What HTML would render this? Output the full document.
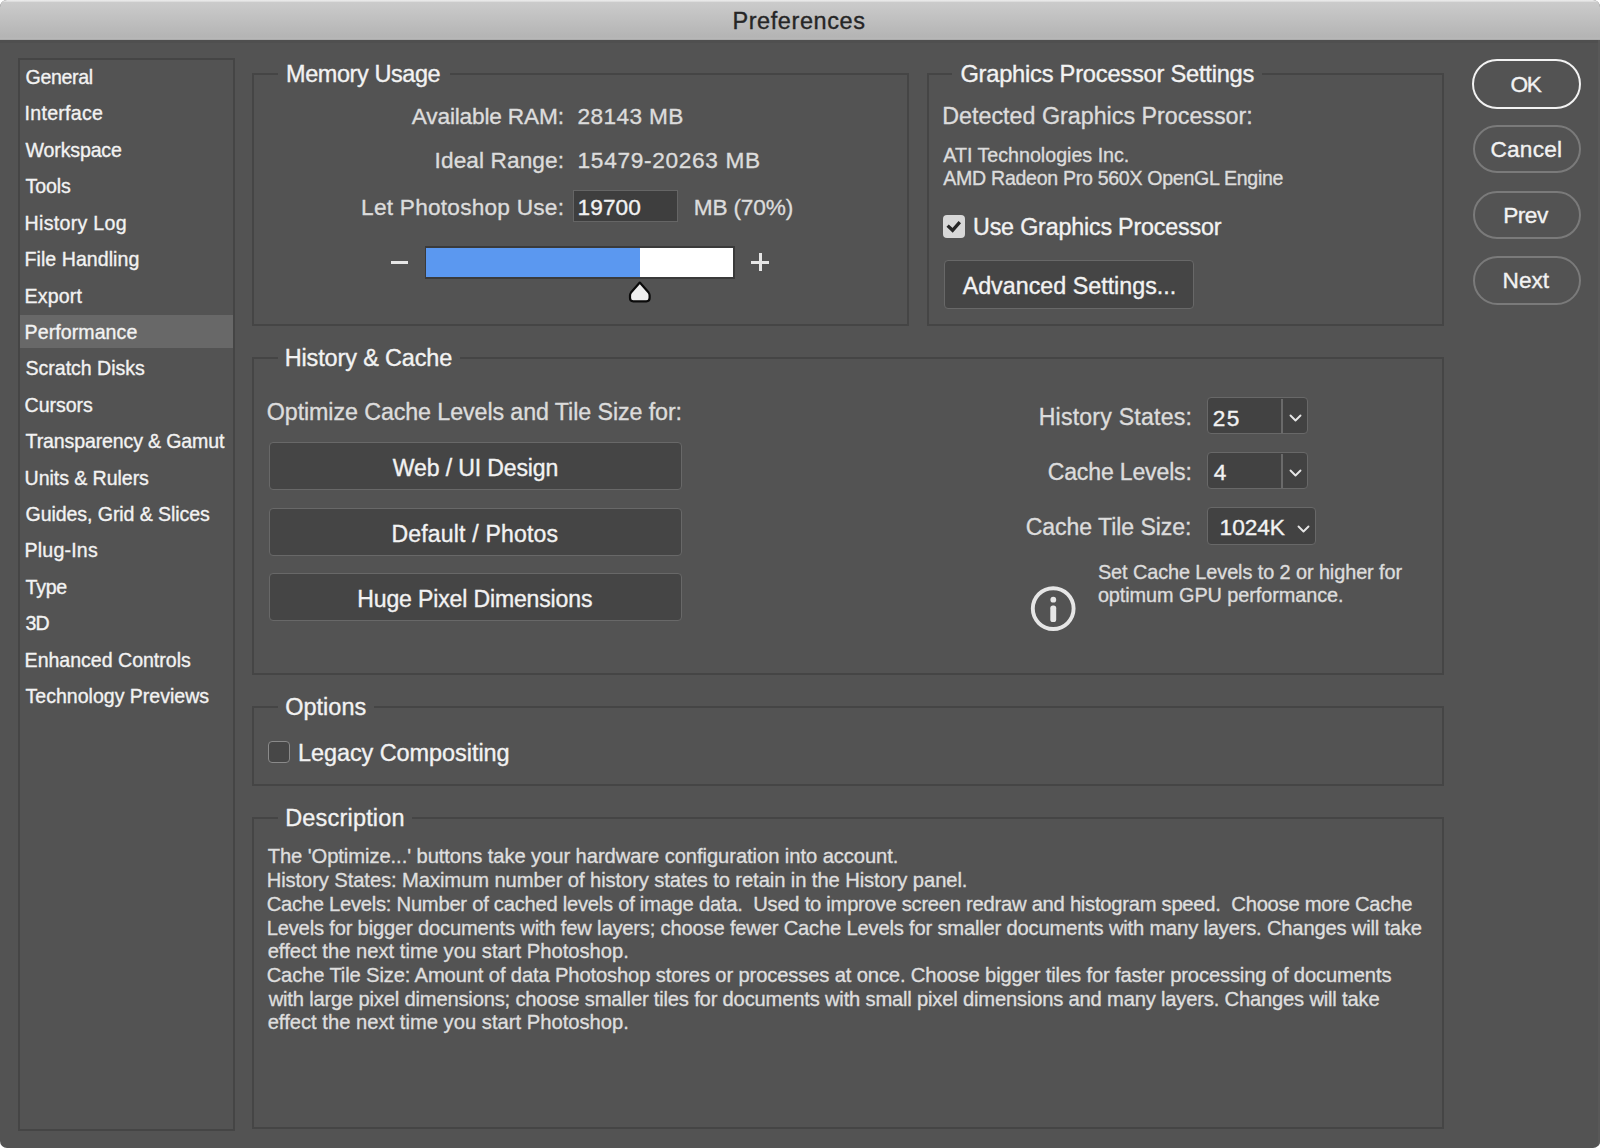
<!DOCTYPE html>
<html><head><meta charset="utf-8"><style>
html,body{margin:0;padding:0;background:#ffffff;width:1600px;height:1148px;overflow:hidden}
body{font-family:"Liberation Sans",sans-serif;position:relative}
.win{position:absolute;left:0;top:0;width:1600px;height:1148px;background:#535353;border-radius:7px 7px 7px 7px;overflow:hidden}
.title{position:absolute;left:0;top:0;width:1600px;height:40px;background:linear-gradient(#ebebeb 0px,#e6e6e6 1px,#cbcbcb 2.5px,#b4b4b4 37px,#b8b8b8 39px,#a0a0a0 40px)}
.t{position:absolute;white-space:pre;-webkit-text-stroke:0.35px currentColor}
.box{position:absolute;box-sizing:border-box;border:2px solid #454545}
.gap{position:absolute;background:#535353}
.btn{position:absolute;box-sizing:border-box;background:#454545;border:1.5px solid #686868;border-radius:4px}
.pill{position:absolute;box-sizing:border-box;border:2px solid #7a7a7a;border-radius:25px}
</style></head><body><div class="win">
<div class="title"></div>
<div style="position:absolute;left:0;top:40px;width:1600px;height:3px;background:#4f4f4f"></div>
<div style="position:absolute;left:1598px;top:40px;width:2px;height:1108px;background:#585858"></div>
<div class="box" style="left:18px;top:58px;width:217px;height:1073px;"></div>
<div style="position:absolute;left:20px;top:315px;width:213px;height:33px;background:#686868"></div>
<div class="box" style="left:252px;top:73px;width:657px;height:253px;"></div>
<div class="gap" style="left:278px;top:72px;width:172px;height:4px;"></div>
<div style="position:absolute;left:573px;top:190px;width:105px;height:32px;box-sizing:border-box;background:#3e3e3e;border:1.5px solid #656565"></div>
<div style="position:absolute;left:391px;top:260.5px;width:17px;height:3px;background:#e6e6e6"></div>
<div style="position:absolute;left:424.5px;top:246px;width:310px;height:32.5px;background:#3a3a3a"></div>
<div style="position:absolute;left:426px;top:247.5px;width:214px;height:29.5px;background:#5b98f0"></div>
<div style="position:absolute;left:640px;top:247.5px;width:93px;height:29.5px;background:#ffffff"></div>
<div style="position:absolute;left:751px;top:260.5px;width:18px;height:3px;background:#e6e6e6"></div>
<div style="position:absolute;left:758.5px;top:253px;width:3px;height:18px;background:#e6e6e6"></div>
<svg style="position:absolute;left:626px;top:279px" width="26" height="25" viewBox="0 0 26 25"><path d="M13.8 3.6 L22.6 13.6 Q23.6 14.8 23.6 16.5 L23.6 19 Q23.6 22.3 20.3 22.3 L7.3 22.3 Q4 22.3 4 19 L4 16.5 Q4 14.8 5 13.6 Z" fill="#eeeeee" stroke="#0a0a0a" stroke-width="2.2" stroke-linejoin="round"/></svg>
<div class="box" style="left:927px;top:73px;width:517px;height:253px;"></div>
<div class="gap" style="left:952px;top:72px;width:310px;height:4px;"></div>
<div style="position:absolute;left:943px;top:215px;width:22px;height:22.5px;box-sizing:border-box;background:#d8d8d8;border-radius:4px"></div>
<svg style="position:absolute;left:943px;top:215px" width="22" height="22" viewBox="0 0 22 22"><path d="M4.6 10.6 L9.6 15.3 L16.8 7.2" fill="none" stroke="#262626" stroke-width="3.3" stroke-linecap="butt" stroke-linejoin="miter"/></svg>
<div class="btn" style="left:944px;top:260px;width:250px;height:49px"></div>
<div class="pill" style="left:1472px;top:59px;width:109px;height:50px;border-color:#f2f2f2"></div>
<div class="pill" style="left:1472.5px;top:125px;width:108.5px;height:48.4px"></div>
<div class="pill" style="left:1472.5px;top:190.7px;width:108.5px;height:48.4px"></div>
<div class="pill" style="left:1472.5px;top:256.4px;width:108.5px;height:48.4px"></div>
<div class="box" style="left:252px;top:357px;width:1192px;height:318px;"></div>
<div class="gap" style="left:278px;top:356px;width:182px;height:4px;"></div>
<div class="btn" style="left:269px;top:442px;width:413px;height:48px"></div>
<div class="btn" style="left:269px;top:507.5px;width:413px;height:48px"></div>
<div class="btn" style="left:269px;top:573px;width:413px;height:48px"></div>
<div style="position:absolute;left:1207px;top:397px;width:101px;height:37px;box-sizing:border-box;background:#424242;border:1.5px solid #686868;border-radius:4px"></div>
<div style="position:absolute;left:1281px;top:398.5px;width:1.5px;height:34px;background:#6a6a6a"></div>
<svg style="position:absolute;left:1288px;top:413px" width="15" height="10" viewBox="0 0 15 10"><path d="M2.5 2.5 L7.5 7.5 L12.5 2.5" fill="none" stroke="#e6e6e6" stroke-width="1.9" stroke-linecap="round" stroke-linejoin="round"/></svg>
<div style="position:absolute;left:1207px;top:452px;width:101px;height:37px;box-sizing:border-box;background:#424242;border:1.5px solid #686868;border-radius:4px"></div>
<div style="position:absolute;left:1281px;top:453.5px;width:1.5px;height:34px;background:#6a6a6a"></div>
<svg style="position:absolute;left:1288px;top:468px" width="15" height="10" viewBox="0 0 15 10"><path d="M2.5 2.5 L7.5 7.5 L12.5 2.5" fill="none" stroke="#e6e6e6" stroke-width="1.9" stroke-linecap="round" stroke-linejoin="round"/></svg>
<div style="position:absolute;left:1207px;top:507px;width:109px;height:38px;box-sizing:border-box;background:#424242;border:1.5px solid #686868;border-radius:4px"></div>
<svg style="position:absolute;left:1296px;top:524px" width="15" height="10" viewBox="0 0 15 10"><path d="M2.5 2.5 L7.5 7.5 L12.5 2.5" fill="none" stroke="#e6e6e6" stroke-width="1.9" stroke-linecap="round" stroke-linejoin="round"/></svg>
<svg style="position:absolute;left:1028px;top:583px" width="50" height="50" viewBox="0 0 50 50"><circle cx="25.2" cy="25.6" r="20.4" fill="none" stroke="#e6e6e6" stroke-width="3.9"/><circle cx="25.3" cy="16.7" r="2.9" fill="#e6e6e6"/><rect x="22.3" y="22.6" width="5.9" height="16.4" rx="2.6" fill="#e6e6e6"/></svg>
<div class="box" style="left:252px;top:706px;width:1192px;height:80px;"></div>
<div class="gap" style="left:278px;top:705px;width:96px;height:4px;"></div>
<div style="position:absolute;left:268px;top:740.5px;width:22px;height:22px;box-sizing:border-box;background:#474747;border:1.5px solid #8a8a8a;border-radius:4px"></div>
<div class="box" style="left:252px;top:817px;width:1192px;height:312px;"></div>
<div class="gap" style="left:278px;top:816px;width:134px;height:4px;"></div>
<div class="t" style="left:732.40px;top:9.92px;font-size:23.484px;line-height:23.484px;color:#262626;letter-spacing:0.600px">Preferences</div>
<div class="t" style="left:25.60px;top:68.02px;font-size:19.589499999999997px;line-height:19.589499999999997px;color:#f2f2f2;letter-spacing:-0.367px">General</div>
<div class="t" style="left:24.60px;top:104.44px;font-size:19.589499999999997px;line-height:19.589499999999997px;color:#f2f2f2;letter-spacing:0.263px">Interface</div>
<div class="t" style="left:25.60px;top:140.86px;font-size:19.589499999999997px;line-height:19.589499999999997px;color:#f2f2f2;letter-spacing:-0.160px">Workspace</div>
<div class="t" style="left:25.60px;top:177.28px;font-size:19.589499999999997px;line-height:19.589499999999997px;color:#f2f2f2;letter-spacing:-0.129px">Tools</div>
<div class="t" style="left:24.60px;top:213.70px;font-size:19.589499999999997px;line-height:19.589499999999997px;color:#f2f2f2;letter-spacing:0.297px">History Log</div>
<div class="t" style="left:24.60px;top:250.12px;font-size:19.589499999999997px;line-height:19.589499999999997px;color:#f2f2f2;letter-spacing:0.035px">File Handling</div>
<div class="t" style="left:24.60px;top:286.54px;font-size:19.589499999999997px;line-height:19.589499999999997px;color:#f2f2f2;letter-spacing:0.131px">Export</div>
<div class="t" style="left:24.60px;top:322.96px;font-size:19.589499999999997px;line-height:19.589499999999997px;color:#f2f2f2;letter-spacing:0.061px">Performance</div>
<div class="t" style="left:25.60px;top:359.38px;font-size:19.589499999999997px;line-height:19.589499999999997px;color:#f2f2f2;letter-spacing:-0.040px">Scratch Disks</div>
<div class="t" style="left:24.60px;top:395.80px;font-size:19.589499999999997px;line-height:19.589499999999997px;color:#f2f2f2;letter-spacing:-0.041px">Cursors</div>
<div class="t" style="left:25.60px;top:432.22px;font-size:19.589499999999997px;line-height:19.589499999999997px;color:#f2f2f2;letter-spacing:-0.148px">Transparency &amp; Gamut</div>
<div class="t" style="left:24.60px;top:468.64px;font-size:19.589499999999997px;line-height:19.589499999999997px;color:#f2f2f2;letter-spacing:-0.064px">Units &amp; Rulers</div>
<div class="t" style="left:25.60px;top:505.06px;font-size:19.589499999999997px;line-height:19.589499999999997px;color:#f2f2f2;letter-spacing:-0.094px">Guides, Grid &amp; Slices</div>
<div class="t" style="left:24.60px;top:541.48px;font-size:19.589499999999997px;line-height:19.589499999999997px;color:#f2f2f2;letter-spacing:0.181px">Plug-Ins</div>
<div class="t" style="left:25.60px;top:577.90px;font-size:19.589499999999997px;line-height:19.589499999999997px;color:#f2f2f2;letter-spacing:-0.285px">Type</div>
<div class="t" style="left:25.60px;top:614.32px;font-size:19.589499999999997px;line-height:19.589499999999997px;color:#f2f2f2;letter-spacing:-1.088px">3D</div>
<div class="t" style="left:24.60px;top:650.74px;font-size:19.589499999999997px;line-height:19.589499999999997px;color:#f2f2f2;letter-spacing:-0.021px">Enhanced Controls</div>
<div class="t" style="left:25.60px;top:687.16px;font-size:19.589499999999997px;line-height:19.589499999999997px;color:#f2f2f2;letter-spacing:-0.023px">Technology Previews</div>
<div class="t" style="left:286.00px;top:62.72px;font-size:23.484px;line-height:23.484px;color:#f2f2f2;letter-spacing:-0.410px">Memory Usage</div>
<div class="t" style="left:411.80px;top:105.12px;font-size:22.66px;line-height:22.66px;color:#dcdcdc;letter-spacing:-0.175px">Available RAM:</div>
<div class="t" style="left:577.60px;top:105.12px;font-size:22.66px;line-height:22.66px;color:#dcdcdc;letter-spacing:0.347px">28143 MB</div>
<div class="t" style="left:434.60px;top:148.92px;font-size:22.66px;line-height:22.66px;color:#dcdcdc;letter-spacing:0.083px">Ideal Range:</div>
<div class="t" style="left:577.60px;top:148.92px;font-size:22.66px;line-height:22.66px;color:#dcdcdc;letter-spacing:0.668px">15479-20263 MB</div>
<div class="t" style="left:361.10px;top:195.92px;font-size:22.66px;line-height:22.66px;color:#dcdcdc;letter-spacing:0.229px">Let Photoshop Use:</div>
<div class="t" style="left:577.60px;top:196.22px;font-size:22.66px;line-height:22.66px;color:#f2f2f2;letter-spacing:0.075px">19700</div>
<div class="t" style="left:693.70px;top:195.92px;font-size:22.66px;line-height:22.66px;color:#dcdcdc;letter-spacing:-0.167px">MB (70%)</div>
<div class="t" style="left:960.40px;top:62.55px;font-size:23.69px;line-height:23.69px;color:#f2f2f2;letter-spacing:-0.237px">Graphics Processor Settings</div>
<div class="t" style="left:942.30px;top:104.80px;font-size:23.278000000000002px;line-height:23.278000000000002px;color:#dcdcdc;letter-spacing:0.005px">Detected Graphics Processor:</div>
<div class="t" style="left:943.30px;top:145.93px;font-size:19.690999999999995px;line-height:19.690999999999995px;color:#dcdcdc;letter-spacing:-0.020px">ATI Technologies Inc.</div>
<div class="t" style="left:943.30px;top:169.22px;font-size:19.589499999999997px;line-height:19.589499999999997px;color:#dcdcdc;letter-spacing:-0.299px">AMD Radeon Pro 560X OpenGL Engine</div>
<div class="t" style="left:973.00px;top:216.10px;font-size:23.278000000000002px;line-height:23.278000000000002px;color:#f2f2f2;letter-spacing:-0.175px">Use Graphics Processor</div>
<div class="t" style="left:962.65px;top:275.20px;font-size:23.278000000000002px;line-height:23.278000000000002px;color:#f2f2f2;letter-spacing:0.011px">Advanced Settings...</div>
<div class="t" style="left:1510.40px;top:72.72px;font-size:22.66px;line-height:22.66px;color:#f2f2f2;letter-spacing:-1.223px">OK</div>
<div class="t" style="left:1490.40px;top:137.92px;font-size:22.66px;line-height:22.66px;color:#f2f2f2;letter-spacing:0.242px">Cancel</div>
<div class="t" style="left:1503.20px;top:204.02px;font-size:22.66px;line-height:22.66px;color:#f2f2f2;letter-spacing:-0.486px">Prev</div>
<div class="t" style="left:1502.60px;top:269.42px;font-size:22.66px;line-height:22.66px;color:#f2f2f2;letter-spacing:-0.030px">Next</div>
<div class="t" style="left:284.70px;top:347.32px;font-size:23.484px;line-height:23.484px;color:#f2f2f2;letter-spacing:-0.136px">History &amp; Cache</div>
<div class="t" style="left:266.80px;top:400.90px;font-size:23.278000000000002px;line-height:23.278000000000002px;color:#dcdcdc;letter-spacing:-0.096px">Optimize Cache Levels and Tile Size for:</div>
<div class="t" style="left:392.80px;top:457.37px;font-size:23.072px;line-height:23.072px;color:#f2f2f2;letter-spacing:-0.140px">Web / UI Design</div>
<div class="t" style="left:391.40px;top:522.57px;font-size:23.072px;line-height:23.072px;color:#f2f2f2;letter-spacing:0.169px">Default / Photos</div>
<div class="t" style="left:357.30px;top:588.07px;font-size:23.072px;line-height:23.072px;color:#f2f2f2;letter-spacing:-0.164px">Huge Pixel Dimensions</div>
<div class="t" style="left:1038.65px;top:406.47px;font-size:23.072px;line-height:23.072px;color:#dcdcdc;letter-spacing:0.236px">History States:</div>
<div class="t" style="left:1047.70px;top:461.07px;font-size:23.072px;line-height:23.072px;color:#dcdcdc;letter-spacing:-0.161px">Cache Levels:</div>
<div class="t" style="left:1025.70px;top:516.07px;font-size:23.072px;line-height:23.072px;color:#dcdcdc;letter-spacing:-0.057px">Cache Tile Size:</div>
<div class="t" style="left:1212.70px;top:407.02px;font-size:22.66px;line-height:22.66px;color:#f2f2f2;letter-spacing:1.500px">25</div>
<div class="t" style="left:1213.70px;top:461.42px;font-size:22.66px;line-height:22.66px;color:#f2f2f2;letter-spacing:0.000px">4</div>
<div class="t" style="left:1219.60px;top:516.42px;font-size:22.66px;line-height:22.66px;color:#f2f2f2;letter-spacing:-0.050px">1024K</div>
<div class="t" style="left:1097.90px;top:562.56px;font-size:19.894px;line-height:19.894px;color:#dcdcdc;letter-spacing:-0.086px">Set Cache Levels to 2 or higher for</div>
<div class="t" style="left:1097.90px;top:586.06px;font-size:19.894px;line-height:19.894px;color:#dcdcdc;letter-spacing:-0.078px">optimum GPU performance.</div>
<div class="t" style="left:285.15px;top:696.47px;font-size:23.484px;line-height:23.484px;color:#f2f2f2;letter-spacing:0.042px">Options</div>
<div class="t" style="left:297.90px;top:741.92px;font-size:23.484px;line-height:23.484px;color:#f2f2f2;letter-spacing:-0.055px">Legacy Compositing</div>
<div class="t" style="left:285.15px;top:806.72px;font-size:23.484px;line-height:23.484px;color:#f2f2f2;letter-spacing:0.206px">Description</div>
<div class="t" style="left:267.65px;top:846.40px;font-size:20.198499999999996px;line-height:20.198499999999996px;color:#dedede;letter-spacing:-0.075px">The 'Optimize...' buttons take your hardware configuration into account.</div>
<div class="t" style="left:266.65px;top:870.10px;font-size:20.198499999999996px;line-height:20.198499999999996px;color:#dedede;letter-spacing:-0.091px">History States: Maximum number of history states to retain in the History panel.</div>
<div class="t" style="left:266.65px;top:893.80px;font-size:20.198499999999996px;line-height:20.198499999999996px;color:#dedede;letter-spacing:-0.257px">Cache Levels: Number of cached levels of image data.  Used to improve screen redraw and histogram speed.  Choose more Cache</div>
<div class="t" style="left:266.65px;top:917.50px;font-size:20.198499999999996px;line-height:20.198499999999996px;color:#dedede;letter-spacing:-0.197px">Levels for bigger documents with few layers; choose fewer Cache Levels for smaller documents with many layers. Changes will take</div>
<div class="t" style="left:267.65px;top:941.20px;font-size:20.198499999999996px;line-height:20.198499999999996px;color:#dedede;letter-spacing:0.007px">effect the next time you start Photoshop.</div>
<div class="t" style="left:266.65px;top:964.90px;font-size:20.198499999999996px;line-height:20.198499999999996px;color:#dedede;letter-spacing:-0.141px">Cache Tile Size: Amount of data Photoshop stores or processes at once. Choose bigger tiles for faster processing of documents</div>
<div class="t" style="left:268.65px;top:988.60px;font-size:20.198499999999996px;line-height:20.198499999999996px;color:#dedede;letter-spacing:-0.196px">with large pixel dimensions; choose smaller tiles for documents with small pixel dimensions and many layers. Changes will take</div>
<div class="t" style="left:267.65px;top:1012.30px;font-size:20.198499999999996px;line-height:20.198499999999996px;color:#dedede;letter-spacing:0.007px">effect the next time you start Photoshop.</div>
</div></body></html>
